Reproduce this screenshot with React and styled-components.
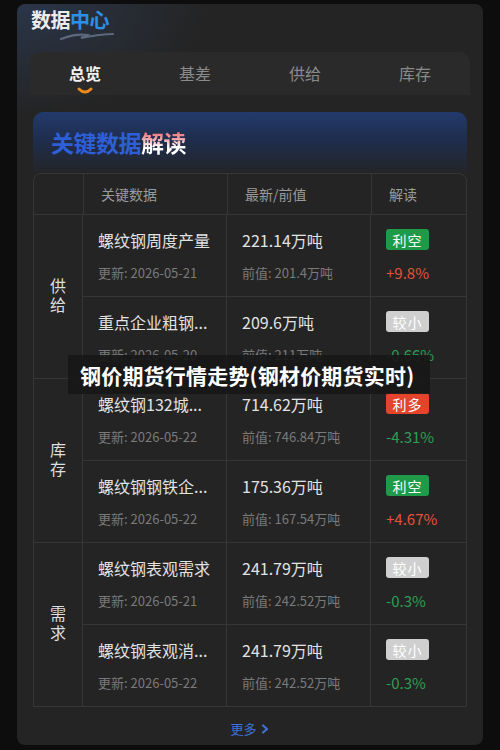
import React from "react";
import styled, { createGlobalStyle } from "styled-components";

const GlobalStyle = createGlobalStyle`
	html, body {
		margin: 0;
		padding: 0;
		background: #0d0d0d;
	}
	body {
		font-family: "Noto Sans CJK SC", "Noto Sans", sans-serif;
		color: #e0e0e0;
	}
`;

const Page = styled.div`
	position: relative;
	width: 500px;
	height: 750px;
	padding: 4px 17px 0;
	box-sizing: border-box;
	overflow: hidden;
	background: #0d0d0d;
`;

const Panel = styled.div`
	height: 741px;
	border-radius: 8px;
	background: radial-gradient(ellipse 190px 110px at 0 0, rgba(48, 68, 104, 0.55), rgba(36, 36, 36, 0) 100%), #242424;
	display: flex;
	flex-direction: column;
`;

const Header = styled.div`
	height: 48px;
	padding: 4px 0 0 14px;
	box-sizing: border-box;
`;

const TitleWrap = styled.div`
	position: relative;
	display: inline-block;
	font-size: 20px;
	line-height: 24px;
	font-weight: 700;
	color: #ececec;
	letter-spacing: -0.5px;
`;

const Blue = styled.span`
	color: #2d8fe6;
`;

const Squiggle = styled.svg`
	position: absolute;
	left: 28px;
	top: 22px;
`;

const Tabs = styled.div`
	margin: 0 13px;
	height: 43px;
	border-radius: 10px 10px 0 0;
	background: #2a2a2a;
	display: grid;
	grid-template-columns: repeat(4, 1fr);
`;

const Tab = styled.div`
	position: relative;
	display: flex;
	justify-content: center;
	padding-top: 10px;
	font-size: 16px;
	line-height: 22px;
	font-weight: ${(p) => (p.$active ? 700 : 400)};
	color: ${(p) => (p.$active ? "#f2f2f2" : "#8a8a8a")};
`;

const Smile = styled.svg`
	position: absolute;
	left: 50%;
	top: 35px;
	transform: translateX(-50%);
`;

const Card = styled.div`
	margin: 17px 16px 0;
	border-radius: 10px 10px 0 0;
	background: linear-gradient(180deg, #223a6c 0%, #1f2d4c 45%, #242424 100%);
	background-size: 100% 64px;
	background-repeat: no-repeat;
	background-color: #242424;
`;

const CardTitle = styled.div`
	height: 61px;
	padding: 14px 0 0 18px;
	box-sizing: border-box;
	font-size: 23px;
	line-height: 32px;
	font-weight: 700;
	letter-spacing: -0.5px;
`;

const TitleBlue = styled.span`
	color: #2e5fd6;
`;

const TitleRed = styled.span`
	background: linear-gradient(180deg, #e8424c 0%, #f0a0a4 40%, #ffffff 65%);
	-webkit-background-clip: text;
	background-clip: text;
	color: transparent;
`;

const Table = styled.div`
	border: 1px solid #363636;
	border-radius: 8px 8px 0 0;
	background: #242424;
`;

const HeadRow = styled.div`
	display: grid;
	grid-template-columns: 49px 144px 144px 1fr;
	height: 40px;
	border-bottom: 1px solid #363636;
`;

const HeadCell = styled.div`
	display: flex;
	align-items: center;
	padding-left: 17px;
	font-size: 14px;
	color: #9a9a9a;
	border-left: ${(p) => (p.$first ? "none" : "1px solid #363636")};
`;

const Group = styled.div`
	display: grid;
	grid-template-columns: 49px 1fr;
	border-top: ${(p) => (p.$first ? "none" : "1px solid #363636")};
`;

const GroupLabel = styled.div`
	display: flex;
	align-items: center;
	justify-content: center;
	writing-mode: vertical-rl;
	text-orientation: upright;
	font-size: 16px;
	line-height: 16px;
	letter-spacing: 3px;
	color: #dedede;
	border-right: 1px solid #363636;
`;

const Rows = styled.div`
	display: flex;
	flex-direction: column;
`;

const Row = styled.div`
	display: grid;
	grid-template-columns: 144px 144px 1fr;
	height: 81px;
	border-top: ${(p) => (p.$first ? "none" : "1px solid #363636")};
`;

const Cell = styled.div`
	display: flex;
	flex-direction: column;
	padding: 14px 10px 0 15px;
	min-width: 0;
	border-right: ${(p) => (p.$last ? "none" : "1px solid #363636")};
`;

const Main = styled.div`
	font-size: 16px;
	line-height: 22px;
	color: #e2e2e2;
	white-space: nowrap;
`;

const Sub = styled.div`
	margin-top: 13px;
	font-size: 13px;
	line-height: 18px;
	color: #7a7a7a;
	white-space: nowrap;
`;

const badgeColors = {
	bear: "#1f9a48",
	bull: "#e3442b",
	small: "#cfcfcf",
};

const Badge = styled.div`
	align-self: flex-start;
	width: 43px;
	height: 21px;
	border-radius: 3px;
	display: flex;
	align-items: center;
	justify-content: center;
	font-size: 14px;
	color: #fff;
	background: ${(p) => badgeColors[p.$type]};
	letter-spacing: 1px;
`;

const Pct = styled.div`
	margin-top: 14px;
	font-size: 15px;
	line-height: 18px;
	color: ${(p) => (p.$up ? "#e4523c" : "#2e9e56")};
`;

const More = styled.div`
	display: flex;
	justify-content: center;
	align-items: center;
	gap: 3px;
	padding-top: 13px;
	font-size: 13px;
	line-height: 18px;
	color: #3d72d6;
`;

const Caption = styled.div`
	position: absolute;
	left: 68px;
	top: 355px;
	width: 362px;
	height: 39px;
	padding-left: 12px;
	box-sizing: border-box;
	background: rgba(24, 24, 24, 0.92);
	display: flex;
	align-items: center;
	font-size: 21px;
	font-weight: 700;
	color: #ffffff;
	white-space: nowrap;
	letter-spacing: 0.2px;
`;

const groups = [
	{
		label: "供给",
		rows: [
			{ name: "螺纹钢周度产量", date: "2026-05-21", value: "221.14万吨", prev: "201.4万吨", badge: "bear", text: "利空", pct: "+9.8%", up: true },
			{ name: "重点企业粗钢...", date: "2026-05-20", value: "209.6万吨", prev: "211万吨", badge: "small", text: "较小", pct: "-0.66%", up: false },
		],
	},
	{
		label: "库存",
		rows: [
			{ name: "螺纹钢132城...", date: "2026-05-22", value: "714.62万吨", prev: "746.84万吨", badge: "bull", text: "利多", pct: "-4.31%", up: false },
			{ name: "螺纹钢钢铁企...", date: "2026-05-22", value: "175.36万吨", prev: "167.54万吨", badge: "bear", text: "利空", pct: "+4.67%", up: true },
		],
	},
	{
		label: "需求",
		rows: [
			{ name: "螺纹钢表观需求", date: "2026-05-21", value: "241.79万吨", prev: "242.52万吨", badge: "small", text: "较小", pct: "-0.3%", up: false },
			{ name: "螺纹钢表观消...", date: "2026-05-22", value: "241.79万吨", prev: "242.52万吨", badge: "small", text: "较小", pct: "-0.3%", up: false },
		],
	},
];

const tabs = ["总览", "基差", "供给", "库存"];

const App = () => {
	return (
		<>
			<GlobalStyle />
			<Page>
				<Panel>
					<Header>
						<TitleWrap>
							数据<Blue>中心</Blue>
							<Squiggle width="56" height="12" viewBox="0 0 56 12">
								<path
									d="M2 9 C 10 6, 20 4, 28 5 L 22 8 C 32 6, 44 4, 54 4"
									fill="none"
									stroke="#6a7891"
									strokeWidth="2.2"
									strokeLinecap="round"
									opacity="0.8"
								/>
							</Squiggle>
						</TitleWrap>
					</Header>
					<Tabs>
						{tabs.map((t, i) => (
							<Tab key={t} $active={i === 0}>
								{t}
								{i === 0 && (
									<Smile width="16" height="8" viewBox="0 0 16 8">
										<path d="M2 2 Q 8 8 14 2" fill="none" stroke="#f08a1c" strokeWidth="3" strokeLinecap="round" />
									</Smile>
								)}
							</Tab>
						))}
					</Tabs>
					<Card>
						<CardTitle>
							<TitleBlue>关键数据</TitleBlue>
							<TitleRed>解读</TitleRed>
						</CardTitle>
						<Table>
							<HeadRow>
								<HeadCell $first />
								<HeadCell>关键数据</HeadCell>
								<HeadCell>最新/前值</HeadCell>
								<HeadCell>解读</HeadCell>
							</HeadRow>
							{groups.map((g, gi) => (
								<Group key={g.label} $first={gi === 0}>
									<GroupLabel>{g.label}</GroupLabel>
									<Rows>
										{g.rows.map((r, ri) => (
											<Row key={r.name} $first={ri === 0}>
												<Cell>
													<Main>{r.name}</Main>
													<Sub>更新: {r.date}</Sub>
												</Cell>
												<Cell>
													<Main>{r.value}</Main>
													<Sub>前值: {r.prev}</Sub>
												</Cell>
												<Cell $last>
													<Badge $type={r.badge}>{r.text}</Badge>
													<Pct $up={r.up}>{r.pct}</Pct>
												</Cell>
											</Row>
										))}
									</Rows>
								</Group>
							))}
						</Table>
					</Card>
					<More>
						更多
						<svg width="10" height="10" viewBox="0 0 10 10">
							<path d="M3 1.5 L7 5 L3 8.5" fill="none" stroke="#3d72d6" strokeWidth="2.2" strokeLinecap="round" strokeLinejoin="round" />
						</svg>
					</More>
				</Panel>
				<Caption>钢价期货行情走势(钢材价期货实时)</Caption>
			</Page>
		</>
	);
};

export default App;
